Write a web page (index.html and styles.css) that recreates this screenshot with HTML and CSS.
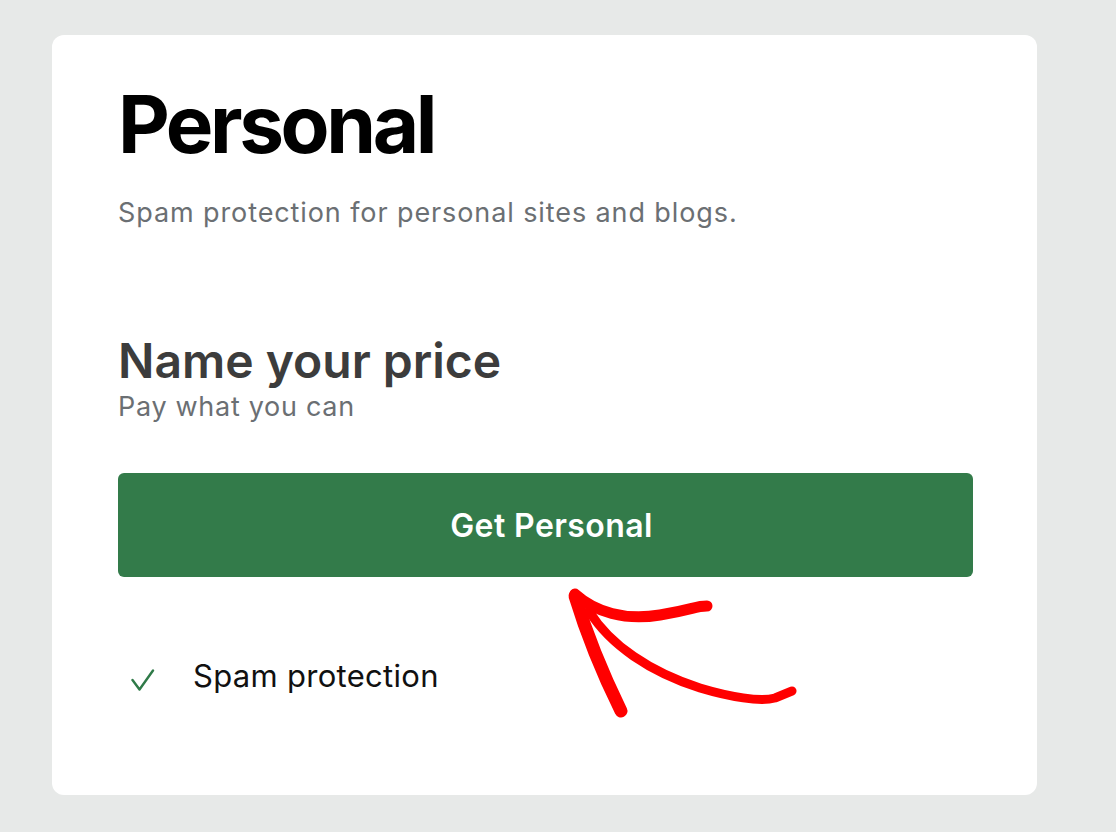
FILE: index.html
```html
<!DOCTYPE html>
<html lang="en">
<head>
<meta charset="utf-8">
<title>Personal plan</title>
<link rel="stylesheet" href="styles.css">
</head>
<body>
<main class="page">
  <section class="card">
    <h1 class="plan-title">Personal</h1>
    <p class="plan-desc">Spam protection for personal sites and blogs.</p>
    <div class="price">
      <h2 class="price-title">Name your price</h2>
      <p class="price-sub">Pay what you can</p>
    </div>
    <a class="cta" href="#">Get Personal</a>
    <ul class="features">
      <li class="feature">
        <svg class="check" viewBox="0 0 26 22" width="26" height="22" aria-hidden="true"><path d="M2.5 11 L9.5 20.5 L23 1.5" fill="none" stroke="#2f7a48" stroke-width="2.4" stroke-linecap="round" stroke-linejoin="round"/></svg>
        <span>Spam protection</span>
      </li>
    </ul>
  </section>
  <svg class="arrow" viewBox="0 0 1116 832" width="1116" height="832" aria-hidden="true">
    <g fill="none" stroke="#ff0000" stroke-linecap="round" stroke-linejoin="round">
      <path d="M575 596 Q 592 652 621 711" stroke-width="13"/>
      <path d="M575 594 C 595 612, 625 621, 660 615 S 695 606, 707 606" stroke-width="11"/>
      <path d="M589 611 C 610 645, 650 672, 700 688 C 730 697, 760 702, 775 698 L 792 691" stroke-width="9"/>
    </g>
  </svg>
</main>
</body>
</html>
```

FILE: styles.css
```css
* { box-sizing: border-box; }
html, body { margin: 0; padding: 0; }
body {
  background: #e7e9e8;
  font-family: Inter, "Liberation Sans", Arial, sans-serif;
  width: 1116px;
  height: 832px;
  overflow: hidden;
}
.page {
  position: relative;
  padding: 35px 0 0 52px;
  height: 832px;
}
.card {
  width: 985px;
  height: 760px;
  background: #ffffff;
  border-radius: 12px;
  padding: 49px 64px 0 66px;
}
.plan-title {
  margin: 0;
  font-size: 80px;
  line-height: 80px;
  font-weight: 700;
  color: #000;
  letter-spacing: -3.4px;
}
.plan-desc {
  margin: 32px 0 0;
  font-size: 27px;
  line-height: 34px;
  letter-spacing: 0.9px;
  color: #6b6f73;
}
.price { margin-top: 106px; }
.price-title {
  margin: 0;
  font-size: 48px;
  line-height: 50px;
  font-weight: 600;
  color: #3c3c3c;
}
.price-sub {
  margin: 5px 0 0;
  font-size: 27px;
  line-height: 32px;
  letter-spacing: 0.7px;
  color: #6b6f73;
}
.cta {
  display: flex;
  align-items: center;
  justify-content: center;
  margin-top: 50px;
  height: 104px;
  padding-left: 12px;
  background: #337b4a;
  border-radius: 6px;
  color: #fff;
  text-decoration: none;
  font-size: 32px;
  font-weight: 600;
  letter-spacing: 0.4px;
}
.features {
  list-style: none;
  margin: 79px 0 0;
  padding: 0 0 0 12px;
}
.feature {
  display: flex;
  align-items: flex-start;
  gap: 37px;
  font-size: 31px;
  line-height: 40px;
  letter-spacing: 0.3px;
  color: #111;
}
.check { flex: none; margin-top: 13px; }
.arrow {
  position: absolute;
  left: 0;
  top: 0;
  pointer-events: none;
}
```
